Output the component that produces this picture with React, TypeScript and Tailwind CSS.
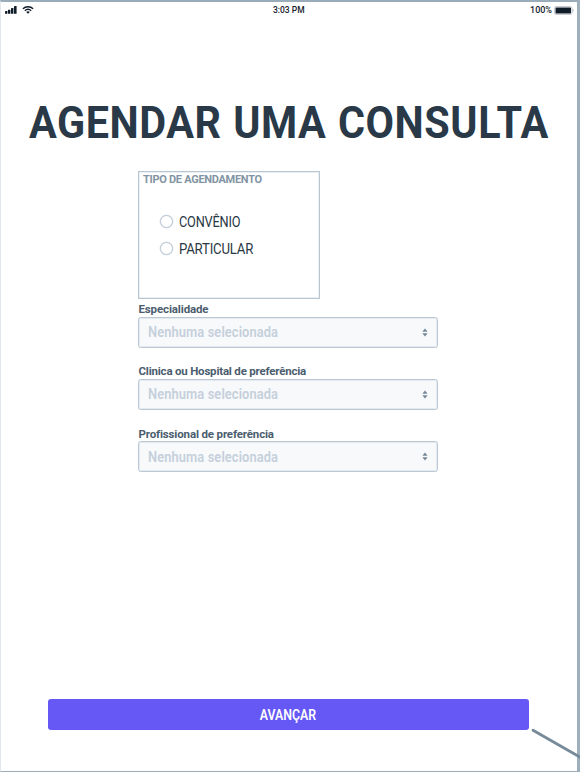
function StatusBar() {
  return (
    <header className="relative flex h-4 shrink-0 items-center justify-between pl-[3.500px] pr-[3px] text-[9px] font-medium leading-none text-[#17222d]">
      <div className="flex items-center gap-[5px]">
        <svg className="h-2 w-3" viewBox="0 0 12 8" fill="#101c27">
          <rect x="0" y="5" width="2.4" height="2.800" rx="0.4" />
          <rect x="3" y="3.700" width="2.4" height="4.100" rx="0.4" />
          <rect x="6" y="2" width="2.4" height="5.800" rx="0.4" />
          <rect x="9" y="0.100" width="2.600" height="7.700" rx="0.4" />
        </svg>
        <svg className="h-2 w-3" viewBox="0 0 12 8" fill="none" stroke="#101c27">
          <path d="M0.9 2.8C3.7 0.2 8.3 0.2 11.1 2.8" strokeWidth="1.5" />
          <path d="M2.8 4.7C4.6 3.1 7.4 3.1 9.2 4.7" strokeWidth="1.3" />
          <path d="M4.2 6 6 7.8 7.8 6C6.8 5.1 5.2 5.1 4.2 6Z" fill="#101c27" stroke="none" />
        </svg>
      </div>
      <span className="absolute left-[272px] top-[4px] origin-left scale-x-[0.94] whitespace-nowrap text-[9px]">3:03 PM</span>
      <div className="flex items-center gap-[2px]">
        <span>100%</span>
        <svg className="h-[9px] w-5" viewBox="0 0 20 9">
          <rect x="0.5" y="0.5" width="17.5" height="8" rx="1.5" fill="#fff" stroke="#c9ced2" />
          <rect x="1.5" y="1.4" width="15.5" height="6.2" rx="0.6" fill="#101c27" />
          <path d="M18.3 2.800c1.800.4 1.800 3 0 3.400Z" fill="#b8bfc5" />
        </svg>
      </div>
    </header>
  );
}

function RadioOption({ label, spacing }: { label: string; spacing: string }) {
  return (
    <label className="flex h-[27px] items-center gap-[6px]">
      <span className="size-[13px] rounded-full border border-[#bac6d1] bg-white shadow-[0_0_0_0.500px_#dfe6ec]" />
      <span className={`origin-left text-[14px] leading-none text-[#293845] ${spacing}`}>{label}</span>
    </label>
  );
}

function SelectField({ label, spacing }: { label: string; spacing: string }) {
  return (
    <div className="flex h-[62.3px] flex-col">
      <span className={`h-[14.500px] whitespace-nowrap pl-[0.500px] text-[11.500px] font-bold leading-[14px] text-[#4a5d6e] ${spacing}`}>
        {label}
      </span>
      <div className="flex h-[31px] w-[300px] items-center justify-between rounded-[2.500px] border border-[#bcc8d3] bg-[#f8f9fb] px-[9px] shadow-[inset_0_0_0_1px_#e4eaef]">
        <span className="origin-left scale-x-[0.92] text-[14px] font-semibold leading-none tracking-[0.1px] text-[#c5d0db]">Nenhuma selecionada</span>
        <svg className="h-[9px] w-[6px]" viewBox="0 0 6 9" fill="#738797">
          <path d="M0.900 3.400 3 0.800 5.100 3.400Z" stroke="#738797" strokeWidth="0.500" />
          <path d="M0.900 5.600h4.200L3 8.200Z" stroke="#738797" strokeWidth="0.500" />
        </svg>
      </div>
    </div>
  );
}

export default function App() {
  return (
    <div className="relative h-[772px] w-[580px] overflow-hidden font-['Roboto',sans-serif]">
      <main className="flex h-full flex-col border-b border-l border-r-[3px] border-t-2 border-b-[#9aabb9] border-l-[#e2e8ee] border-r-[#9eafbc] border-t-[#9aabb9] bg-white">
        <StatusBar />
        <h1 className="ml-[28px] mt-[81px] h-[50px] origin-left scale-x-[0.95] whitespace-nowrap text-[43.500px] font-bold leading-[50px] tracking-[0.6px] text-[#293947] [word-spacing:0.700px]">
          AGENDAR UMA CONSULTA
        </h1>
        <div className="ml-[137px] mt-[22px] flex flex-col">
          <section className="h-[128px] w-[181.500px] border border-[#b9c7d3] pl-[4px] pt-px shadow-[inset_0_0_0_1px_#eaeff3]">
            <h2 className="text-[11px] font-bold leading-[13px] tracking-[-0.29px] text-[#8294a3]">TIPO DE AGENDAMENTO</h2>
            <div className="ml-[17px] mt-[22px] flex flex-col">
              <RadioOption label="CONVÊNIO" spacing="scale-x-[0.91] tracking-[-0.2px]" />
              <RadioOption label="PARTICULAR" spacing="scale-x-[0.94] tracking-[-0.2px]" />
            </div>
          </section>
          <div className="mt-[3px] flex flex-col">
            <SelectField label="Especialidade" spacing="tracking-[-0.13px]" />
            <SelectField label="Clinica ou Hospital de preferência" spacing="tracking-[-0.2px]" />
            <SelectField label="Profissional de preferência" spacing="tracking-[-0.15px]" />
          </div>
        </div>
        <button className="mb-[41px] ml-[47px] mt-auto flex h-[31px] w-[480.500px] shrink-0 items-center justify-center rounded-[3px] bg-[#6558f5] text-[14px] font-semibold leading-none text-white">
          <span className="scale-x-[0.88]">AVANÇAR</span>
        </button>
      </main>
      <svg className="absolute left-[530px] top-[727px] h-[35px] w-[50px]" viewBox="0 0 50 35">
        <path d="M3 3.200 51 30.800" fill="none" stroke="#778a99" strokeWidth="2.800" strokeLinecap="round" />
      </svg>
    </div>
  );
}
